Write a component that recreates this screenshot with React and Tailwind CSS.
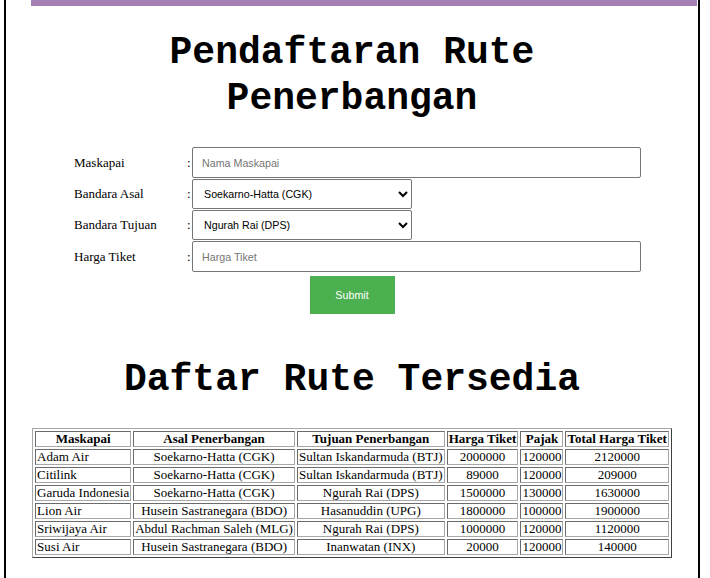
import React from "react";

const rows = [
  ["Adam Air", "Soekarno-Hatta (CGK)", "Sultan Iskandarmuda (BTJ)", "2000000", "120000", "2120000"],
  ["Citilink", "Soekarno-Hatta (CGK)", "Sultan Iskandarmuda (BTJ)", "89000", "120000", "209000"],
  ["Garuda Indonesia", "Soekarno-Hatta (CGK)", "Ngurah Rai (DPS)", "1500000", "130000", "1630000"],
  ["Lion Air", "Husein Sastranegara (BDO)", "Hasanuddin (UPG)", "1800000", "100000", "1900000"],
  ["Sriwijaya Air", "Abdul Rachman Saleh (MLG)", "Ngurah Rai (DPS)", "1000000", "120000", "1120000"],
  ["Susi Air", "Husein Sastranegara (BDO)", "Inanwatan (INX)", "20000", "120000", "140000"],
];

const heads = ["Maskapai", "Asal Penerbangan", "Tujuan Penerbangan", "Harga Tiket", "Pajak", "Total Harga Tiket"];

const cell =
  "border border-t-[#6b6b6b] border-l-[#6b6b6b] border-b-[#a8a8a8] border-r-[#a8a8a8] px-[1px] py-0 leading-[14px] whitespace-nowrap";

function Label({ children }) {
  return (
    <div className="flex w-[118px] shrink-0 items-center">
      <span className="w-[113px] font-['Liberation_Serif',serif] text-[13px] text-black">{children}</span>
      <span className="font-['Liberation_Serif',serif] text-[13px] text-black">:</span>
    </div>
  );
}

export default function App() {
  return (
    <div className="h-[578px] overflow-hidden bg-white">
      <div className="ml-[4px] min-h-[600px] w-[696px] border-x-2 border-black">
        <div className="ml-[25px] mr-[1px] h-[6px] bg-[#a67fb6]" />
        <h1 className="mx-auto mt-[24px] w-[520px] text-center font-['Liberation_Mono',monospace] text-[38px] font-bold leading-[46px] text-black">
          Pendaftaran Rute Penerbangan
        </h1>

        <div className="mt-[25px] flex flex-col gap-[1px] pl-[68px]">
          <div className="flex items-center">
            <Label>Maskapai</Label>
            <input
              placeholder="Nama Maskapai"
              className="h-[31px] w-[449px] rounded-[2px] border border-[#767676] px-[9px] font-['Liberation_Sans',Arial,sans-serif] text-[10.7px] text-black placeholder:text-[#757575] outline-none"
            />
          </div>
          <div className="flex items-center">
            <Label>Bandara Asal</Label>
            <select
              defaultValue="CGK"
              className="h-[30px] w-[220px] rounded-[2px] border border-[#767676] bg-white pl-[7px] font-['Liberation_Sans',Arial,sans-serif] text-[10.7px] text-black"
            >
              <option value="CGK">Soekarno-Hatta (CGK)</option>
            </select>
          </div>
          <div className="flex items-center">
            <Label>Bandara Tujuan</Label>
            <select
              defaultValue="DPS"
              className="h-[30px] w-[220px] rounded-[2px] border border-[#767676] bg-white pl-[7px] font-['Liberation_Sans',Arial,sans-serif] text-[10.7px] text-black"
            >
              <option value="DPS">Ngurah Rai (DPS)</option>
            </select>
          </div>
          <div className="flex items-center">
            <Label>Harga Tiket</Label>
            <input
              placeholder="Harga Tiket"
              className="h-[31px] w-[449px] rounded-[2px] border border-[#767676] px-[9px] font-['Liberation_Sans',Arial,sans-serif] text-[10.7px] text-black placeholder:text-[#757575] outline-none"
            />
          </div>
        </div>

        <div className="mt-[4px] flex justify-center">
          <button className="h-[38px] w-[85px] bg-[#4caf50] font-['Liberation_Sans',Arial,sans-serif] text-[10.7px] text-white">
            Submit
          </button>
        </div>

        <h2 className="mt-[43px] text-center font-['Liberation_Mono',monospace] text-[38px] font-bold leading-[46px] text-black">
          Daftar Rute Tersedia
        </h2>

        <table className="mx-auto mt-[25px] border-separate border-spacing-[2px] border border-t-[#a8a8a8] border-l-[#a8a8a8] border-b-[#404040] border-r-[#404040] font-['Liberation_Serif',serif] text-[13px] text-black">
          <thead>
            <tr>
              {heads.map((h) => (
                <th key={h} className={cell + " text-center font-bold"}>
                  {h}
                </th>
              ))}
            </tr>
          </thead>
          <tbody>
            {rows.map((r) => (
              <tr key={r[0]}>
                {r.map((c, i) => (
                  <td key={i} className={cell + (i === 0 || i === 4 ? " text-left" : " text-center")}>
                    {c}
                  </td>
                ))}
              </tr>
            ))}
          </tbody>
        </table>
      </div>
    </div>
  );
}
